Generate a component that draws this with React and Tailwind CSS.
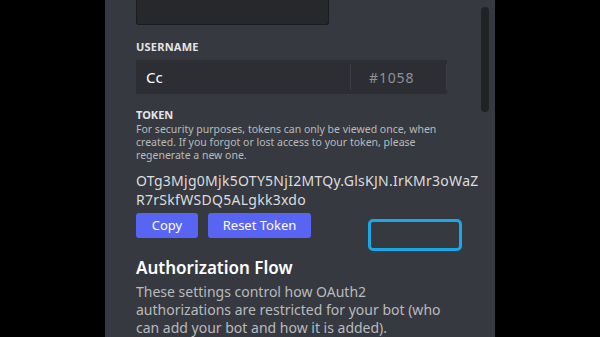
import React from 'react'

export default function App(){
  return (
    <div className="w-[600px] h-[337px] bg-black flex justify-center overflow-hidden" style={{ fontFamily: '"Noto Sans", "Open Sans", sans-serif' }}>
      <div className="relative w-[390px] h-full bg-[#36393f] overflow-hidden">
        {/* scrollbar */}
        <div className="absolute left-[376px] top-[7px] w-[8px] h-[105px] rounded bg-[#202225]" />

        <div className="pl-[31px] w-[373px] overflow-hidden">
          <div className="w-[193px] h-[25px] bg-[#26282c] border border-t-0 border-[#1b1c1f] rounded-b-[3px]" />

          <div className="mt-[15px] text-[11px] leading-[14px] font-bold text-[#e3e5e8] tracking-[0.02em]">USERNAME</div>
          <div className="mt-[6px] w-[311px] h-[34px] flex items-stretch bg-[#2c2e33]">
            <div className="flex-1 flex items-center pl-[10px] text-[15px] text-white">Cc</div>
            <div className="w-px my-[4px] bg-[#3c3f45]" />
            <div className="w-[95px] flex items-center pl-[18px] text-[14px] tracking-[0.06em] text-[#8e9297]">#1058</div>
            <div className="w-px my-[4px] bg-[#3c3f45]" />
          </div>

          <div className="mt-[14px] text-[11px] leading-[14px] font-bold text-[#e3e5e8]">TOKEN</div>
          <p className="mt-[1px] w-[320px] text-[10.5px] leading-[13px] text-[#b9bbbe]">
            For security purposes, tokens can only be viewed once, when created. If you forgot or lost access to your token, please regenerate a new one.
          </p>

          <div className="mt-[9px] text-[14px] leading-[19px] text-[#dcddde] tracking-[0.02em]">
            <div className="whitespace-nowrap">OTg3Mjg0Mjk5OTY5NjI2MTQy.GlsKJN.IrKMr3oWaZ</div>
            <div className="whitespace-nowrap">R7rSkfWSDQ5ALgkk3xdo</div>
          </div>

          <div className="mt-[4px] flex gap-[10px]">
            <button className="w-[62px] h-[25px] rounded-[3px] bg-[#5865f2] text-white text-[13px]">Copy</button>
            <button className="w-[103px] h-[25px] rounded-[3px] bg-[#5865f2] text-white text-[13px]">Reset Token</button>
          </div>

          <h2 className="mt-[19px] text-[17px] leading-[22px] font-semibold text-white">Authorization Flow</h2>
          <p className="mt-[4px] w-[310px] text-[14px] leading-[18px] text-[#b9bbbe]">
            These settings control how OAuth2 authorizations are restricted for your bot (who can add your bot and how it is added).
          </p>
        </div>

        {/* highlight */}
        <div className="absolute left-[263px] top-[219px] w-[94px] h-[32px] rounded-[5px] border-[3px] border-[#19a8e6]" />
      </div>
    </div>
  )
}
